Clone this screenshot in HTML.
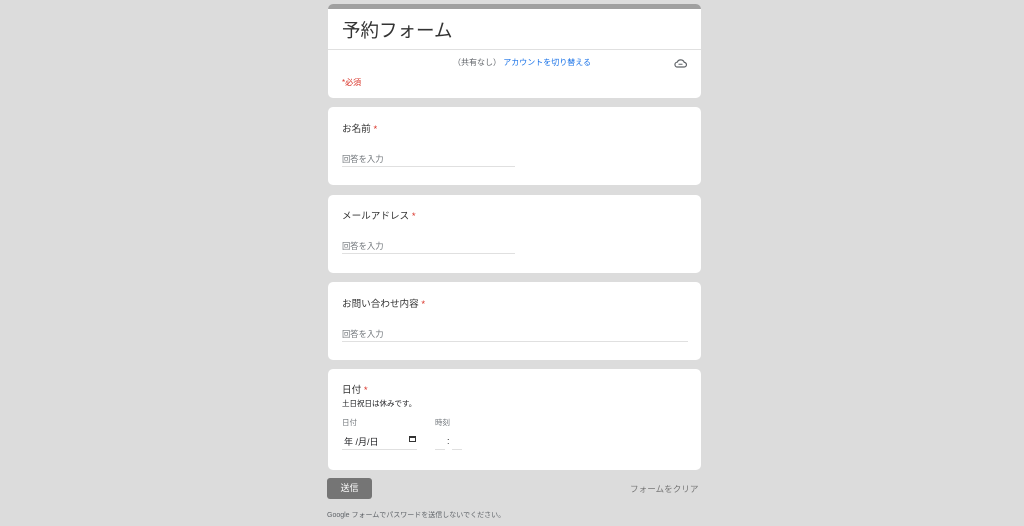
<!DOCTYPE html>
<html><head><meta charset="utf-8"><style>
*{margin:0;padding:0;box-sizing:border-box}
body{width:1024px;height:526px;background:#dcdcdc;font-family:"Liberation Sans","Noto Sans CJK JP",sans-serif;position:relative;overflow:hidden;color:#202124}
.card{position:absolute;left:328px;width:373px;background:#fff;border-radius:5px}
.a{position:absolute;white-space:nowrap}
.q{font-size:9.6px;color:#333}
.q b{color:#d93025;font-weight:normal}
.ph{font-size:8.3px;color:#70757a}
.ln{position:absolute;height:1px;background:#e0e0e0}
</style></head><body>
<div class="card" style="top:4px;height:94px;overflow:hidden">
 <div style="height:5px;background:#a0a0a0"></div>
 <div class="a" style="left:14px;top:13px;font-size:18.5px;color:#333">予約フォーム</div>
 <div class="ln" style="left:0;right:0;top:45px"></div>
 <div class="a" style="left:125px;top:53px;font-size:8px;color:#5f6368">（共有なし） <span style="color:#1a73e8">アカウントを切り替える</span></div>
 <svg class="a" style="left:346px;top:54px" width="13" height="10" viewBox="0 0 13 10"><path d="M3.5 9h6.5a2.3 2.3 0 0 0 .3-4.6A3.8 3.8 0 0 0 3.2 4.2 2.4 2.4 0 0 0 3.5 9z" fill="none" stroke="#5f6368" stroke-width="1.2"/><path d="M4.5 6.3h4" stroke="#5f6368" stroke-width="1"/></svg>
 <div class="a" style="left:14px;top:73px;font-size:8px;color:#d93025">*必須</div>
</div>
<div class="card" style="top:107px;height:78px">
 <div class="a q" style="left:14px;top:14px">お名前 <b>*</b></div>
 <div class="a ph" style="left:14px;top:46px">回答を入力</div>
 <div class="ln" style="left:14px;width:173px;top:59px"></div>
</div>
<div class="card" style="top:195px;height:78px">
 <div class="a q" style="left:14px;top:13px">メールアドレス <b>*</b></div>
 <div class="a ph" style="left:14px;top:45px">回答を入力</div>
 <div class="ln" style="left:14px;width:173px;top:58px"></div>
</div>
<div class="card" style="top:282px;height:78px">
 <div class="a q" style="left:14px;top:14px">お問い合わせ内容 <b>*</b></div>
 <div class="a ph" style="left:14px;top:46px">回答を入力</div>
 <div class="ln" style="left:14px;width:346px;top:59px"></div>
</div>
<div class="card" style="top:369px;height:101px">
 <div class="a q" style="left:14px;top:13px">日付 <b>*</b></div>
 <div class="a" style="left:14px;top:29px;font-size:7.5px;color:#202124">土日祝日は休みです。</div>
 <div class="a" style="left:14px;top:48px;font-size:7.5px;color:#70757a">日付</div>
 <div class="a" style="left:107px;top:48px;font-size:7.5px;color:#70757a">時刻</div>
 <div class="a" style="left:16px;top:66px;font-size:9px;color:#202124">年 /月/日</div>
 <div class="a" style="left:81px;top:67px;width:7px;height:6px;border:1px solid #333;border-top-width:2px"></div>
 <div class="ln" style="left:14px;width:75px;top:80px"></div>
 <div class="a" style="left:119px;top:67px;font-size:9px">:</div>
 <div class="ln" style="left:107px;width:10px;top:80px"></div>
 <div class="ln" style="left:124px;width:10px;top:80px"></div>
</div>
<div class="a" style="left:327px;top:478px;width:45px;height:21px;background:#757575;border-radius:3px;color:#fff;font-size:9px;text-align:center;line-height:21px">送信</div>
<div class="a" style="left:630px;top:483px;font-size:8.6px;color:#757575">フォームをクリア</div>
<div class="a" style="left:327px;top:510px;font-size:7px;color:#5f6368">Google フォームでパスワードを送信しないでください。</div>
</body></html>
